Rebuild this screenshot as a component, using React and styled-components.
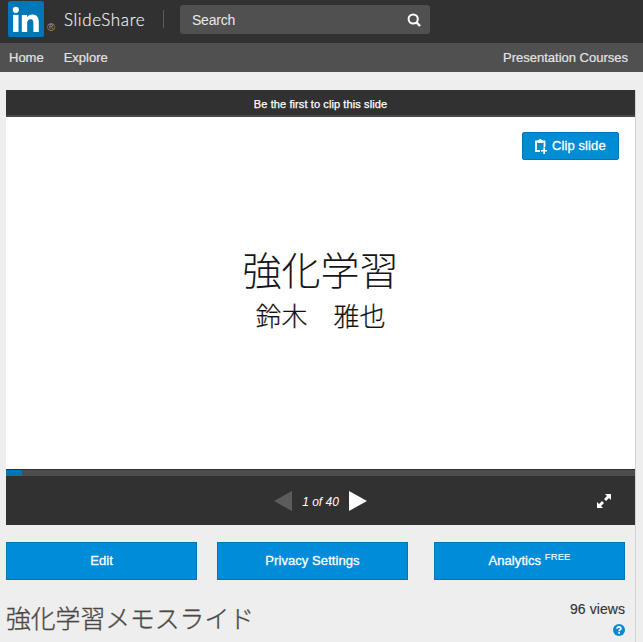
import React from "react";
import styled, { createGlobalStyle } from "styled-components";

const GlobalStyle = createGlobalStyle`
  * { box-sizing: border-box; }
  body {
    margin: 0;
    background: #eeeeee;
    font-family: "Liberation Sans", "Noto Sans CJK JP", sans-serif;
    overflow: hidden;
  }
`;

const Page = styled.div`
  width: 643px;
  height: 642px;
  display: flex;
  flex-direction: column;
  overflow: hidden;
`;

const Header = styled.header`
  flex: none;
  height: 43px;
  background: #313131;
  display: flex;
  align-items: flex-start;
  padding-left: 8px;
`;

const Logo = styled.svg`
  display: block;
  flex: none;
  width: 36px;
  height: 36px;
  margin-top: 1px;
`;

const Registered = styled.span`
  width: 12px;
  margin: 21px 0 0 3px;
  font-size: 11px;
  line-height: 13px;
  color: #999;
`;

const Brand = styled.span`
  width: 105px;
  height: 18px;
  margin-top: 10px;
  padding-left: 5px;
  border-right: 1px solid #5c5c5c;
  font-family: Lato, sans-serif;
  font-weight: 300;
  font-size: 17px;
  line-height: 19px;
  letter-spacing: 0.6px;
  white-space: nowrap;
  color: #f4f4f4;
  -webkit-text-stroke: 0.15px #f4f4f4;
`;

const SearchBox = styled.div`
  width: 250px;
  height: 29px;
  margin: 5px 0 0 16px;
  padding: 0 9px 0 12px;
  border-radius: 3px;
  background: #505050;
  color: #e8e8e8;
  font-size: 14px;
  letter-spacing: -0.22px;
  display: flex;
  align-items: center;
  justify-content: space-between;
`;

const Icon = styled.svg`
  display: block;
  flex: none;
  width: ${(p) => p.$w}px;
  height: ${(p) => p.$h}px;
`;

const Nav = styled.nav`
  flex: none;
  height: 29px;
  padding: 0 15px 0 9px;
  background: #505050;
  display: flex;
  align-items: center;
`;

const NavLink = styled.a`
  color: #e3e3e3;
  font-size: 13px;
  line-height: 29px;
  -webkit-text-stroke: 0.2px #e3e3e3;
  margin-left: ${(p) => p.$left || "0"};
  white-space: nowrap;
`;

const Main = styled.main`
  width: 630px;
  height: 552px;
  margin: 18px 0 0 6px;
  border-right: 1px solid #d2d2d2;
`;

const ClipBar = styled.div`
  height: 27px;
  background: #313131;
  border-bottom: 2px solid #484848;
  color: #fff;
  text-align: center;
  font-size: 11px;
  line-height: 28px;
  letter-spacing: 0.1px;
  -webkit-text-stroke: 0.25px #fff;
`;

const Slide = styled.section`
  height: 352px;
  padding: 15px 16px 0;
  background: #fff;
  display: flex;
  flex-direction: column;
`;

const ClipButton = styled.button`
  align-self: flex-end;
  width: 97px;
  height: 28px;
  padding: 0 0 0 12px;
  border: 1px solid #0077b5;
  border-radius: 2px;
  background: #008cd4;
  color: #fff;
  font: 13px "Liberation Sans", sans-serif;
  letter-spacing: 0.1px;
  -webkit-text-stroke: 0.3px #fff;
  display: flex;
  align-items: center;
  gap: 5px;
  white-space: nowrap;
`;

const ClipLabel = styled.span`
  margin-top: -1px;
`;

const SlideTitle = styled.h2`
  margin: 79px 0 0;
  font: 300 39px/58px "Noto Sans CJK JP", sans-serif;
  color: #161616;
  text-align: center;
`;

const SlideAuthor = styled.p`
  margin: -1px 0 0;
  font: 300 26px/38px "Noto Sans CJK JP", sans-serif;
  color: #101010;
  -webkit-text-stroke: 0.2px #101010;
  text-align: center;
  white-space: pre;
`;

const Track = styled.div`
  height: 7px;
  border-top: 1px solid #313131;
  background: #4d4d4d;
`;

const Progress = styled.div`
  width: 16px;
  height: 6px;
  background: #0077b5;
`;

const Controls = styled.div`
  height: 49px;
  background: #313131;
  display: grid;
  grid-template-columns: 268px 18px 57px 18px 1fr 14px;
  align-items: center;
  padding-right: 24px;
`;

const Counter = styled.span`
  grid-column: 3;
  padding-top: 2px;
  text-align: center;
  color: #fff;
  font-size: 12px;
  font-style: italic;
`;

const Actions = styled.div`
  display: grid;
  grid-template-columns: 191px 191px 191px;
  column-gap: 20px;
  margin-top: 17px;
`;

const ActionButton = styled.button`
  height: 38px;
  margin: 0 ${(p) => (p.$shift ? -p.$shift : 0)}px 0 ${(p) => p.$shift || 0}px;
  padding: 0;
  border: 1px solid #0077b5;
  background: #008cd9;
  color: #fff;
  font: 13px/36px "Liberation Sans", sans-serif;
  -webkit-text-stroke: 0.3px #fff;
  letter-spacing: 0.07px;

  sup {
    font-size: 9.5px;
    line-height: 0;
    vertical-align: 5px;
    -webkit-text-stroke: 0.1px #fff;
  }
`;

const Details = styled.div`
  display: flex;
  justify-content: space-between;
  padding-right: 10px;
`;

const DeckTitle = styled.h1`
  margin: 18px 0 0 0;
  font: 300 24.8px/38px "Noto Sans CJK JP", sans-serif;
  color: #4c4945;
  -webkit-text-stroke: 0.35px #4c4945;
`;

const Stats = styled.div`
  display: flex;
  flex-direction: column;
  align-items: flex-end;
  padding-top: 21px;
  gap: 7px;
  color: #333;
  font-size: 14px;
  line-height: 16px;
  letter-spacing: 0.07px;
  -webkit-text-stroke: 0.15px #333;
  white-space: nowrap;
`;

const LinkedInLogo = () => (
  <Logo viewBox="0 0 36 36">
    <rect width="36" height="36" rx="2.6" fill="#0077b5" />
    <g fill="#fff">
      <circle cx="7.8" cy="8.8" r="3.1" />
      <rect x="5.1" y="13.9" width="5.4" height="17" />
      <path d="M13.8 13.9H19V16.2C20 14.5 21.8 13.5 24.2 13.5C29.3 13.5 30.8 16.8 30.8 21.5V30.9H25.4V22.6C25.4 20.2 25.1 18.3 22.6 18.3C20 18.3 19.2 20.1 19.2 22.5V30.9H13.8Z" />
    </g>
  </Logo>
);

const SearchIcon = () => (
  <Icon $w={14} $h={14} viewBox="0 0 14 14">
    <circle cx="6.2" cy="6" r="4.6" fill="none" stroke="#fff" strokeWidth="2" />
    <path d="M9.4 9.4 13 13" stroke="#fff" strokeWidth="2.4" />
  </Icon>
);

const ClipIcon = () => (
  <Icon $w={12} $h={15} viewBox="0 0 12 15">
    <path d="M5 12H1V2.5H9.5V8" fill="none" stroke="#fff" strokeWidth="1.8" />
    <path d="M3 1.2H4.2V0H6.4V1.2H7.7V4H3ZM8.3 8.5H10V11H12V12.5H10V15H8.3V12.5H6V11H8.3Z" fill="#fff" />
  </Icon>
);

const ExpandIcon = () => (
  <Icon $w={14} $h={14} viewBox="0 0 14 14">
    <path d="M8 0H14V6L12 4 9 7 7 5 10 2ZM0 8 2 10 5 7 7 9 4 12 6 14H0Z" fill="#fff" />
  </Icon>
);

const HelpIcon = () => (
  <Icon $w={12} $h={12} viewBox="0 0 12 12">
    <circle cx="6" cy="6" r="6" fill="#008cd4" />
    <path d="M4.1 4.7C4.1 2.2 8 2.3 7.9 4.6C7.8 5.9 6.1 5.8 6.1 7.2" fill="none" stroke="#fff" strokeWidth="1.7" />
    <rect x="5.2" y="8.1" width="1.8" height="1.6" fill="#fff" />
  </Icon>
);

export default function App() {
  return (
    <>
      <GlobalStyle />
      <Page>
        <Header>
          <LinkedInLogo />
          <Registered>®</Registered>
          <Brand>SlideShare</Brand>
          <SearchBox>
            <span>Search</span>
            <SearchIcon />
          </SearchBox>
        </Header>
        <Nav>
          <NavLink>Home</NavLink>
          <NavLink $left="20px">Explore</NavLink>
          <NavLink $left="auto">Presentation Courses</NavLink>
        </Nav>
        <Main>
          <ClipBar>Be the first to clip this slide</ClipBar>
          <Slide>
            <ClipButton>
              <ClipIcon />
              <ClipLabel>Clip slide</ClipLabel>
            </ClipButton>
            <SlideTitle>強化学習</SlideTitle>
            <SlideAuthor>鈴木　雅也</SlideAuthor>
          </Slide>
          <Track>
            <Progress />
          </Track>
          <Controls>
            <span />
            <Icon $w={18} $h={20} viewBox="0 0 18 20">
              <path d="M18 0V20L0 10Z" fill="#5c5c5c" />
            </Icon>
            <Counter>1 of 40</Counter>
            <Icon $w={18} $h={20} viewBox="0 0 18 20">
              <path d="M0 0V20L18 10Z" fill="#fff" />
            </Icon>
            <span />
            <ExpandIcon />
          </Controls>
          <Actions>
            <ActionButton>Edit</ActionButton>
            <ActionButton>Privacy Settings</ActionButton>
            <ActionButton $shift={6}>
              Analytics <sup>FREE</sup>
            </ActionButton>
          </Actions>
          <Details>
            <DeckTitle>強化学習メモスライド</DeckTitle>
            <Stats>
              <span>96 views</span>
              <HelpIcon />
            </Stats>
          </Details>
        </Main>
      </Page>
    </>
  );
}
